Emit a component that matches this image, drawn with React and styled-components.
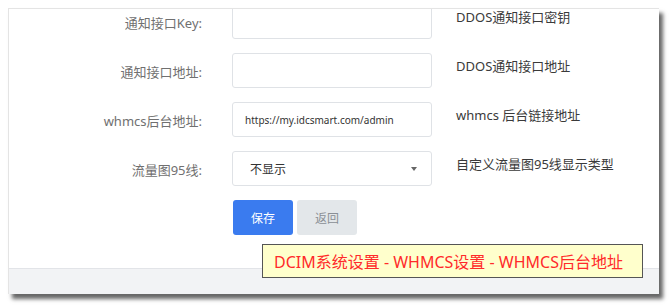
import React from "react";
import styled, { createGlobalStyle } from "styled-components";

const GlobalStyle = createGlobalStyle`
  html, body {
    margin: 0;
    padding: 0;
    background: #fff;
    font-family: "Noto Sans", "Noto Sans CJK SC", sans-serif;
  }
`;

const Page = styled.div`
  width: 671px;
  height: 306px;
  padding: 8px 0 0 8px;
  box-sizing: border-box;
`;

const Window = styled.div`
  position: relative;
  width: 651px;
  height: 286px;
  box-sizing: border-box;
  border-top: 1px solid #e4e4e4;
  border-left: 1px solid #e4e4e4;
  background: #fff;
  box-shadow: 4px 5px 4px rgba(0, 0, 0, 0.6);
  display: flex;
  flex-direction: column;
`;

const Body = styled.div`
  height: 259px;
  overflow: hidden;
  background: #fff;
`;

const Form = styled.div`
  margin-top: -5px;
  display: flex;
  flex-direction: column;
  gap: 14px;
`;

const Row = styled.div`
  display: grid;
  grid-template-columns: 193px 200px 1fr;
  column-gap: 30px;
  align-items: start;
`;

const Label = styled.div`
  height: 35px;
  display: flex;
  align-items: center;
  justify-content: flex-end;
  padding-top: 2px;
  box-sizing: border-box;
  font-size: 13px;
  color: #707070;
`;

const Field = styled.div`
  height: 35px;
  box-sizing: border-box;
  border: 1px solid #dfe2e6;
  border-radius: 3px;
  background: #fff;
  display: flex;
  align-items: center;
  justify-content: space-between;
  padding: 0 14px 0 ${(p) => (p.$select ? "17px" : "12px")};
  font-size: ${(p) => (p.$select ? "12px" : "10px")};
  color: #333;
`;

const Caret = styled.span`
  width: 0;
  height: 0;
  border-left: 3.5px solid transparent;
  border-right: 3.5px solid transparent;
  border-top: 4px solid #666;
`;

const Help = styled.div`
  margin-left: -6px;
  padding-top: 4px;
  line-height: 18px;
  font-size: 13px;
  color: #3a3a3a;
  white-space: nowrap;
`;

const Actions = styled.div`
  display: flex;
  gap: 4px;
  padding-left: 224px;
`;

const Button = styled.button`
  width: 60px;
  height: 35px;
  border: none;
  border-radius: 3px;
  font-family: inherit;
  font-size: 12px;
  background: ${(p) => (p.$primary ? "#3a7bef" : "#e3e7ea")};
  color: ${(p) => (p.$primary ? "#fff" : "#8a8f95")};
  padding: 0;
`;

const Footer = styled.div`
  flex: 1;
  background: #f2f3f5;
  border-top: 1px solid #e2e4e8;
`;

const Tip = styled.div`
  position: absolute;
  left: 253px;
  top: 235px;
  width: 381px;
  height: 34px;
  box-sizing: border-box;
  border: 1px solid #555;
  background: #ffffcc;
  color: #ff2a2a;
  font-size: 16px;
  display: flex;
  align-items: center;
  padding-left: 11px;
  white-space: nowrap;
`;

const rows = [
  { label: "通知接口Key:", value: "", help: "DDOS通知接口密钥" },
  { label: "通知接口地址:", value: "", help: "DDOS通知接口地址" },
  {
    label: "whmcs后台地址:",
    value: "https://my.idcsmart.com/admin",
    help: "whmcs 后台链接地址",
  },
  { label: "流量图95线:", value: "不显示", help: "自定义流量图95线显示类型", select: true },
];

export default function App() {
  return (
    <>
      <GlobalStyle />
      <Page>
        <Window>
          <Body>
            <Form>
              {rows.map((r) => (
                <Row key={r.label}>
                  <Label>{r.label}</Label>
                  <Field $select={r.select}>
                    <span>{r.value}</span>
                    {r.select && <Caret />}
                  </Field>
                  <Help>{r.help}</Help>
                </Row>
              ))}
              <Actions>
                <Button $primary>保存</Button>
                <Button>返回</Button>
              </Actions>
            </Form>
          </Body>
          <Footer />
          <Tip>DCIM系统设置 - WHMCS设置 - WHMCS后台地址</Tip>
        </Window>
      </Page>
    </>
  );
}
